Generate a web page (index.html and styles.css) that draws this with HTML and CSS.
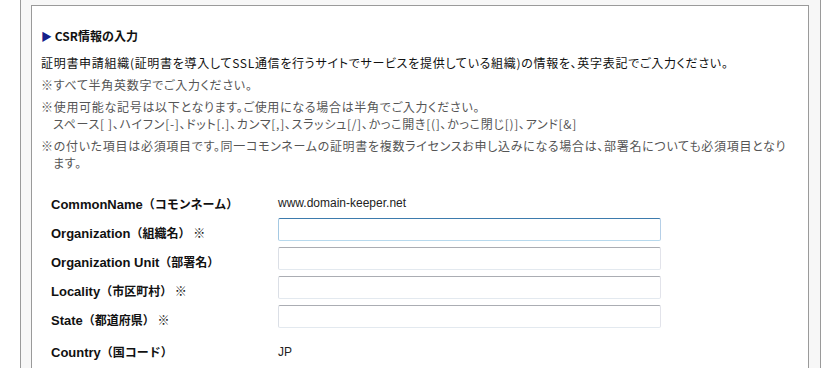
FILE: index.html
```html
<!DOCTYPE html>
<html lang="ja">
<head>
    <meta charset="UTF-8">
    <title>CSR情報の入力</title>
    <link rel="stylesheet" href="styles.css">
</head>
<body>
    <div class="outer">
        <div class="box">
            <h2 class="title"><span class="arrow">&#9654;</span> CSR情報の入力</h2>

            <p class="lead">証明書申請組織(証明書を導入してSSL通信を行うサイトでサービスを提供している組織)の情報を、英字表記でご入力ください。</p>
            <p class="note">※すべて半角英数字でご入力ください。</p>
            <p class="note">※使用可能な記号は以下となります。ご使用になる場合は半角でご入力ください。<br>スペース[ ]、ハイフン[-]、ドット[.]、カンマ[,]、スラッシュ[/]、かっこ開き[(]、かっこ閉じ[)]、アンド[&amp;]</p>
            <p class="note">※の付いた項目は必須項目です。同一コモンネームの証明書を複数ライセンスお申し込みになる場合は、部署名についても必須項目となります。</p>

            <form class="csr-form">
                <div class="row first">
                    <label><span class="en">CommonName</span>（コモンネーム）</label>
                    <span class="value">www.domain-keeper.net</span>
                </div>
                <div class="row">
                    <label><span class="en">Organization</span>（組織名） ※</label>
                    <input type="text" name="organization" class="focused">
                </div>
                <div class="row">
                    <label><span class="en">Organization Unit</span>（部署名）</label>
                    <input type="text" name="organization_unit">
                </div>
                <div class="row">
                    <label><span class="en">Locality</span>（市区町村） ※</label>
                    <input type="text" name="locality">
                </div>
                <div class="row">
                    <label><span class="en">State</span>（都道府県） ※</label>
                    <input type="text" name="state">
                </div>
                <div class="row last">
                    <label><span class="en">Country</span>（国コード）</label>
                    <span class="value">JP</span>
                </div>
            </form>
        </div>
    </div>
</body>
</html>
```

FILE: styles.css
```css
body { margin: 0; background: #fff; font-family: "Noto Sans CJK JP", "Liberation Sans", sans-serif; font-size: 12px; color: #222; }
.outer { width: 778px; margin-left: 20px; border: 1px solid #9a9a9a; border-top: 0; background: #f7f7f7; padding: 5px 11px 0 10px; }
.box { background: #fff; border: 1px solid #9a9a9a; padding: 21px 9px 20px 9px; }
.title { margin: 0 0 9px; font-size: 12px; font-weight: bold; color: #111; line-height: 18px; }
.arrow { color: #15218a; font-size: 11px; }
p { margin: 0 0 5px; line-height: 17px; font-feature-settings: "palt"; letter-spacing: 0.7px; }
.lead { color: #111; }
.note { color: #555; padding-left: 12px; text-indent: -12px; margin-right: 8px; }
.csr-form { margin-top: 18px; }
.row { display: flex; align-items: center; height: 29px; }
.row.first { height: 26px; }
.row.last { margin-top: 3px; }
label { width: 227px; padding-left: 10px; padding-top: 6px; font-size: 12px; font-weight: bold; color: #111; white-space: nowrap; }
.en { font-family: "Liberation Sans", sans-serif; font-size: 13px; }
.row.first label, .row.first .value { padding-top: 2px; }
.value { padding-top: 6px; font-family: "Liberation Sans", "Noto Sans CJK JP", sans-serif; color: #222; }
input { width: 383px; height: 23px; box-sizing: border-box; border: 1px solid; border-color: #abadb3 #e2e3ea #e3e9ef #dbdfe6; border-radius: 2px; padding: 2px 4px; font-size: 12px; }
input.focused { border-color: #3d7bad #b5cfe7 #b7d9ed #a4c9e3; }
```
